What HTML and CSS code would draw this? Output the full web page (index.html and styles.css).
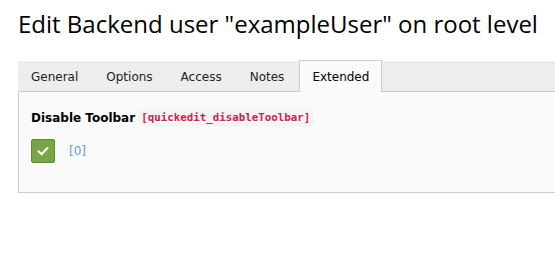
FILE: index.html
```html
<!DOCTYPE html>
<html lang="en">
<head>
<meta charset="utf-8">
<title>Edit Backend user</title>
<link rel="stylesheet" href="styles.css">
</head>
<body>
<div class="page">
  <h1 class="title">Edit Backend user "exampleUser" on root level</h1>
  <div class="tabs">
    <ul class="tab-list">
      <li class="tab">General</li>
      <li class="tab">Options</li>
      <li class="tab">Access</li>
      <li class="tab">Notes</li>
      <li class="tab active">Extended</li>
    </ul>
    <div class="panel">
      <div class="field-label">
        <span class="label-text">Disable Toolbar</span>
        <code class="field-code">[quickedit_disableToolbar]</code>
      </div>
      <div class="field-row">
        <span class="check">
          <svg width="14" height="14" viewBox="0 0 14 14"><path d="M2.5 7.2 L5.6 10.2 L11.5 4" fill="none" stroke="#fff" stroke-width="2" stroke-linecap="round" stroke-linejoin="round"/></svg>
        </span>
        <span class="value">[0]</span>
      </div>
    </div>
  </div>
</div>
</body>
</html>
```

FILE: styles.css
```css
html, body {
  margin: 0;
  padding: 0;
  background: #fff;
}
.page {
  padding: 8px 0 0 18px;
}
.title {
  margin: 0;
  font-family: "Open Sans", sans-serif;
  font-weight: 400;
  font-size: 24px;
  line-height: 32px;
  color: #000;
}
.tabs {
  margin-top: 21px;
}
.tab-list {
  display: flex;
  list-style: none;
  margin: 0;
  padding: 0;
  background: #ededed;
  border-left: 1px solid #ededed;
  border-bottom: 1px solid #cccccc;
  height: 30px;
}
.tab {
  font-family: "DejaVu Sans", sans-serif;
  font-size: 12px;
  color: #222;
  padding: 0 12px;
  line-height: 31px;
  border: 1px solid transparent;
  border-bottom: none;
  margin-right: 2px;
}
.tab:first-child {
  margin-left: -1px;
}
.tab.active {
  background: #fafafa;
  border-color: #cccccc;
  color: #000;
  margin-top: -1px;
  height: 31px;
  line-height: 32px;
}
.panel {
  background: #fafafa;
  border-left: 1px solid #cccccc;
  border-bottom: 1px solid #cccccc;
  height: 101px;
  padding: 17px 12px 0;
  box-sizing: border-box;
}
.field-label {
  display: flex;
  align-items: center;
  gap: 3px;
  font-family: "DejaVu Sans", sans-serif;
  font-size: 12px;
}
.label-text {
  font-weight: bold;
  color: #000;
}
.field-code {
  font-family: "DejaVu Sans Mono", monospace;
  font-weight: bold;
  font-size: 10.8px;
  color: #c7254e;
  background: #f9f2f4;
  padding: 2px 3px;
  border-radius: 3px;
}
.field-row {
  display: flex;
  align-items: center;
  gap: 14px;
  margin-top: 13px;
}
.check {
  width: 24px;
  height: 24px;
  box-sizing: border-box;
  background: #79a548;
  border: 1px solid #5e8a33;
  border-radius: 2px;
  display: flex;
  align-items: center;
  justify-content: center;
}
.check svg {
  display: block;
}
.value {
  font-family: "DejaVu Sans", sans-serif;
  font-size: 12px;
  color: #5f9fdc;
}
```
